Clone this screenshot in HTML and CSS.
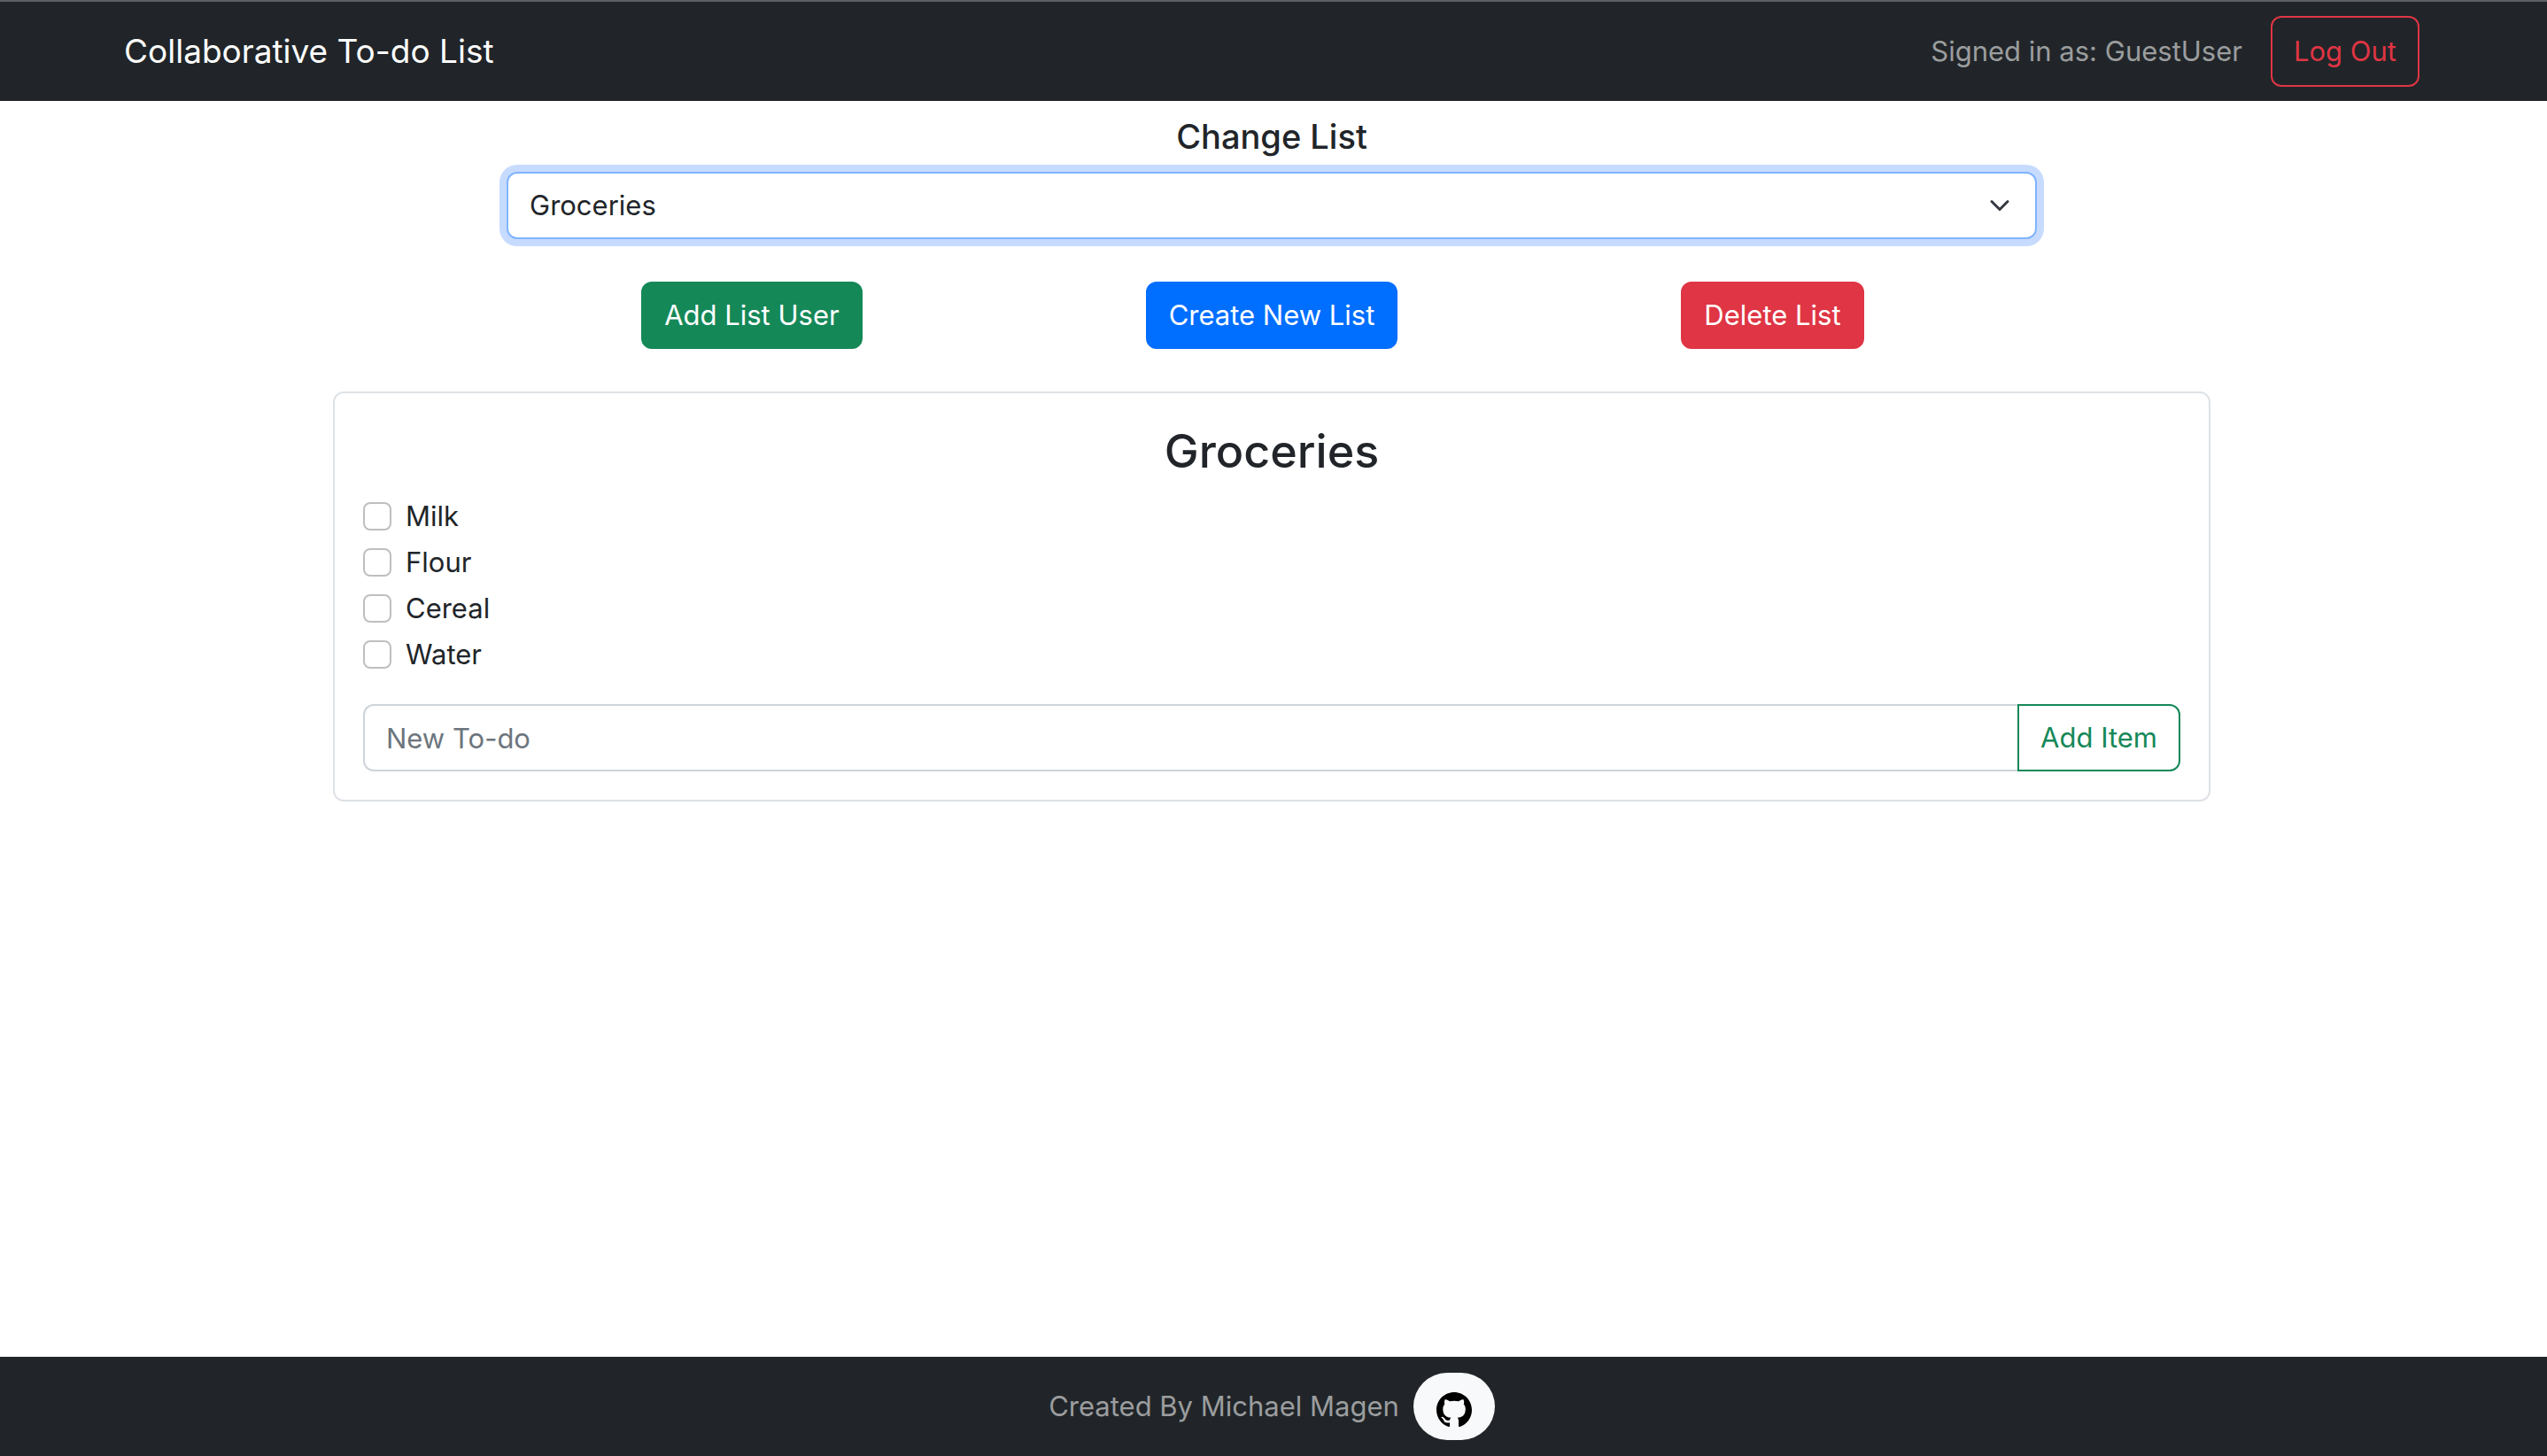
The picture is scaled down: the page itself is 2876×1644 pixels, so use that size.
FILE: index.html
```html
<!DOCTYPE html>
<html lang="en">
<head>
<meta charset="utf-8">
<meta name="viewport" content="width=device-width, initial-scale=1">
<title>Collaborative To-do List</title>
<link rel="stylesheet" href="styles.css">
</head>
<body>
<header class="navbar">
  <div class="navbar-inner">
    <a class="brand" href="#">Collaborative To-do List</a>
    <div class="session">
      <span class="muted">Signed in as: GuestUser</span>
      <button type="button" class="btn btn-logout">Log Out</button>
    </div>
  </div>
</header>
<main class="content">
  <section class="picker">
    <label class="picker-label" for="list-select">Change List</label>
    <select class="list-select" id="list-select">
      <option>Groceries</option>
    </select>
  </section>
  <div class="actions">
    <button type="button" class="btn btn-success">Add List User</button>
    <button type="button" class="btn btn-primary">Create New List</button>
    <button type="button" class="btn btn-danger">Delete List</button>
  </div>
  <section class="card">
    <h1 class="card-title">Groceries</h1>
    <ul class="todos">
      <li><label class="todo"><input class="check" type="checkbox">Milk</label></li>
      <li><label class="todo"><input class="check" type="checkbox">Flour</label></li>
      <li><label class="todo"><input class="check" type="checkbox">Cereal</label></li>
      <li><label class="todo"><input class="check" type="checkbox">Water</label></li>
    </ul>
    <form class="new-todo">
      <input class="new-input" type="text" placeholder="New To-do" aria-label="New To-do">
      <button type="button" class="btn btn-add">Add Item</button>
    </form>
  </section>
</main>
<footer class="footer">
  <span class="muted">Created By Michael Magen</span>
  <a class="github" href="#" aria-label="GitHub">
    <svg class="github-icon" viewBox="0 0 16 16" aria-hidden="true"><path d="M8 0C3.58 0 0 3.58 0 8c0 3.54 2.29 6.53 5.47 7.59.4.07.55-.17.55-.38 0-.19-.01-.82-.01-1.49-2.01.37-2.53-.49-2.69-.94-.09-.23-.48-.94-.82-1.13-.28-.15-.68-.52-.01-.53.63-.01 1.08.58 1.23.82.72 1.21 1.87.87 2.33.66.07-.52.28-.87.51-1.07-1.78-.2-3.64-.89-3.64-3.95 0-.87.31-1.59.82-2.15-.08-.2-.36-1.02.08-2.12 0 0 .67-.21 2.2.82.64-.18 1.32-.27 2-.27s1.36.09 2 .27c1.53-1.04 2.2-.82 2.2-.82.44 1.1.16 1.92.08 2.12.51.56.82 1.27.82 2.15 0 3.07-1.87 3.75-3.65 3.95.29.25.54.73.54 1.48 0 1.07-.01 1.93-.01 2.2 0 .21.15.46.55.38A8.01 8.01 0 0 0 16 8c0-4.42-3.58-8-8-8z"/></svg>
  </a>
</footer>
</body>
</html>
```
FILE: styles.css
```css
* { box-sizing: border-box; }

body {
  display: flex;
  flex-direction: column;
  min-height: 100vh;
  margin: 0;
  background: #fff;
  color: #212529;
  font: 400 31px/48px Inter, "Liberation Sans", sans-serif;
}

/* Bars */
.navbar {
  padding: 16px 4px 16px 0;
  border-top: 2px solid #5c6066;
  background: #212529;
}
.navbar-inner {
  display: flex;
  align-items: center;
  justify-content: space-between;
  max-width: 2640px;
  margin: 0 auto;
  padding: 0 24px;
}
.brand { color: #fff; font-size: 37px; text-decoration: none; }
.session { display: flex; align-items: center; gap: 32px; }
.muted { color: #9b9d9e; }

/* Buttons */
.btn {
  padding: 12px 24px;
  border: 2px solid transparent;
  border-radius: 12px;
  background: none;
  color: #fff;
  font: inherit;
  white-space: nowrap;
}
.btn-logout { padding: 14px 24px; border-color: #df3544; color: #df3544; }
.btn-success { border-color: #158858; background: #158858; }
.btn-primary { border-color: #006eff; background: #006eff; }
.btn-danger { border-color: #df3544; background: #df3544; }

/* Main column */
.content {
  display: flex;
  flex: 1;
  flex-direction: column;
  align-items: center;
  padding: 16px 4px 0 0;
}
.picker {
  display: flex;
  flex-direction: column;
  width: 100%;
  max-width: 1728px;
  gap: 16px;
}
.picker-label { font-size: 38px; font-weight: 500; text-align: center; }
.list-select {
  width: 100%;
  height: 76px;
  padding: 12px 72px 12px 24px;
  border: 2px solid #80b4ff;
  border-radius: 12px;
  outline: 0;
  appearance: none;
  background: #fff url("data:image/svg+xml,%3csvg xmlns='http://www.w3.org/2000/svg' viewBox='0 0 16 16'%3e%3cpath fill='none' stroke='%23343a40' stroke-linecap='round' stroke-linejoin='round' stroke-width='2' d='m2 5 6 6 6-6'/%3e%3c/svg%3e") no-repeat right 28px center / 24px 24px;
  box-shadow: 0 0 0 8px #c7dbff;
  color: inherit;
  font: inherit;
}
.actions {
  display: grid;
  grid-template-columns: 1fr auto 1fr;
  width: 100%;
  max-width: 2120px;
  padding: 48px 0;
  column-gap: 320px;
}
.btn-success { justify-self: end; }
.btn-danger { justify-self: start; }

/* To-do card */
.card {
  width: 100%;
  max-width: 2120px;
  padding: 32px;
  border: 2px solid #dee2e6;
  border-radius: 12px;
}
.card-title {
  margin: 0 0 16px;
  font-size: 52px;
  font-weight: 500;
  line-height: 67px;
  text-align: center;
}
.todos { margin: 0 0 32px; padding: 0; list-style: none; }
.todo { display: flex; align-items: center; gap: 16px; margin-bottom: 4px; }
.check {
  width: 32px;
  height: 32px;
  margin: 0;
  border: 2px solid #bfbfbf;
  border-radius: 8px;
  appearance: none;
  background: #fff;
}
.new-todo { display: flex; }
.new-input {
  flex: 1;
  min-width: 0;
  height: 76px;
  padding: 12px 24px;
  border: 2px solid #ced4da;
  border-right: 0;
  border-radius: 12px 0 0 12px;
  color: inherit;
  font: inherit;
}
.new-input::placeholder { color: #6c757d; opacity: 1; }
.btn-add { border-color: #158858; border-radius: 0 12px 12px 0; color: #158858; }

.footer {
  display: flex;
  align-items: center;
  justify-content: center;
  gap: 16px;
  padding: 18px 4px 18px 0;
  background: #212529;
}
.github {
  display: flex;
  align-items: flex-end;
  justify-content: center;
  width: 92px;
  height: 76px;
  padding-bottom: 14px;
  border-radius: 38px;
  background: #f8f9fa;
}
.github-icon { width: 40px; height: 40px; }
```
